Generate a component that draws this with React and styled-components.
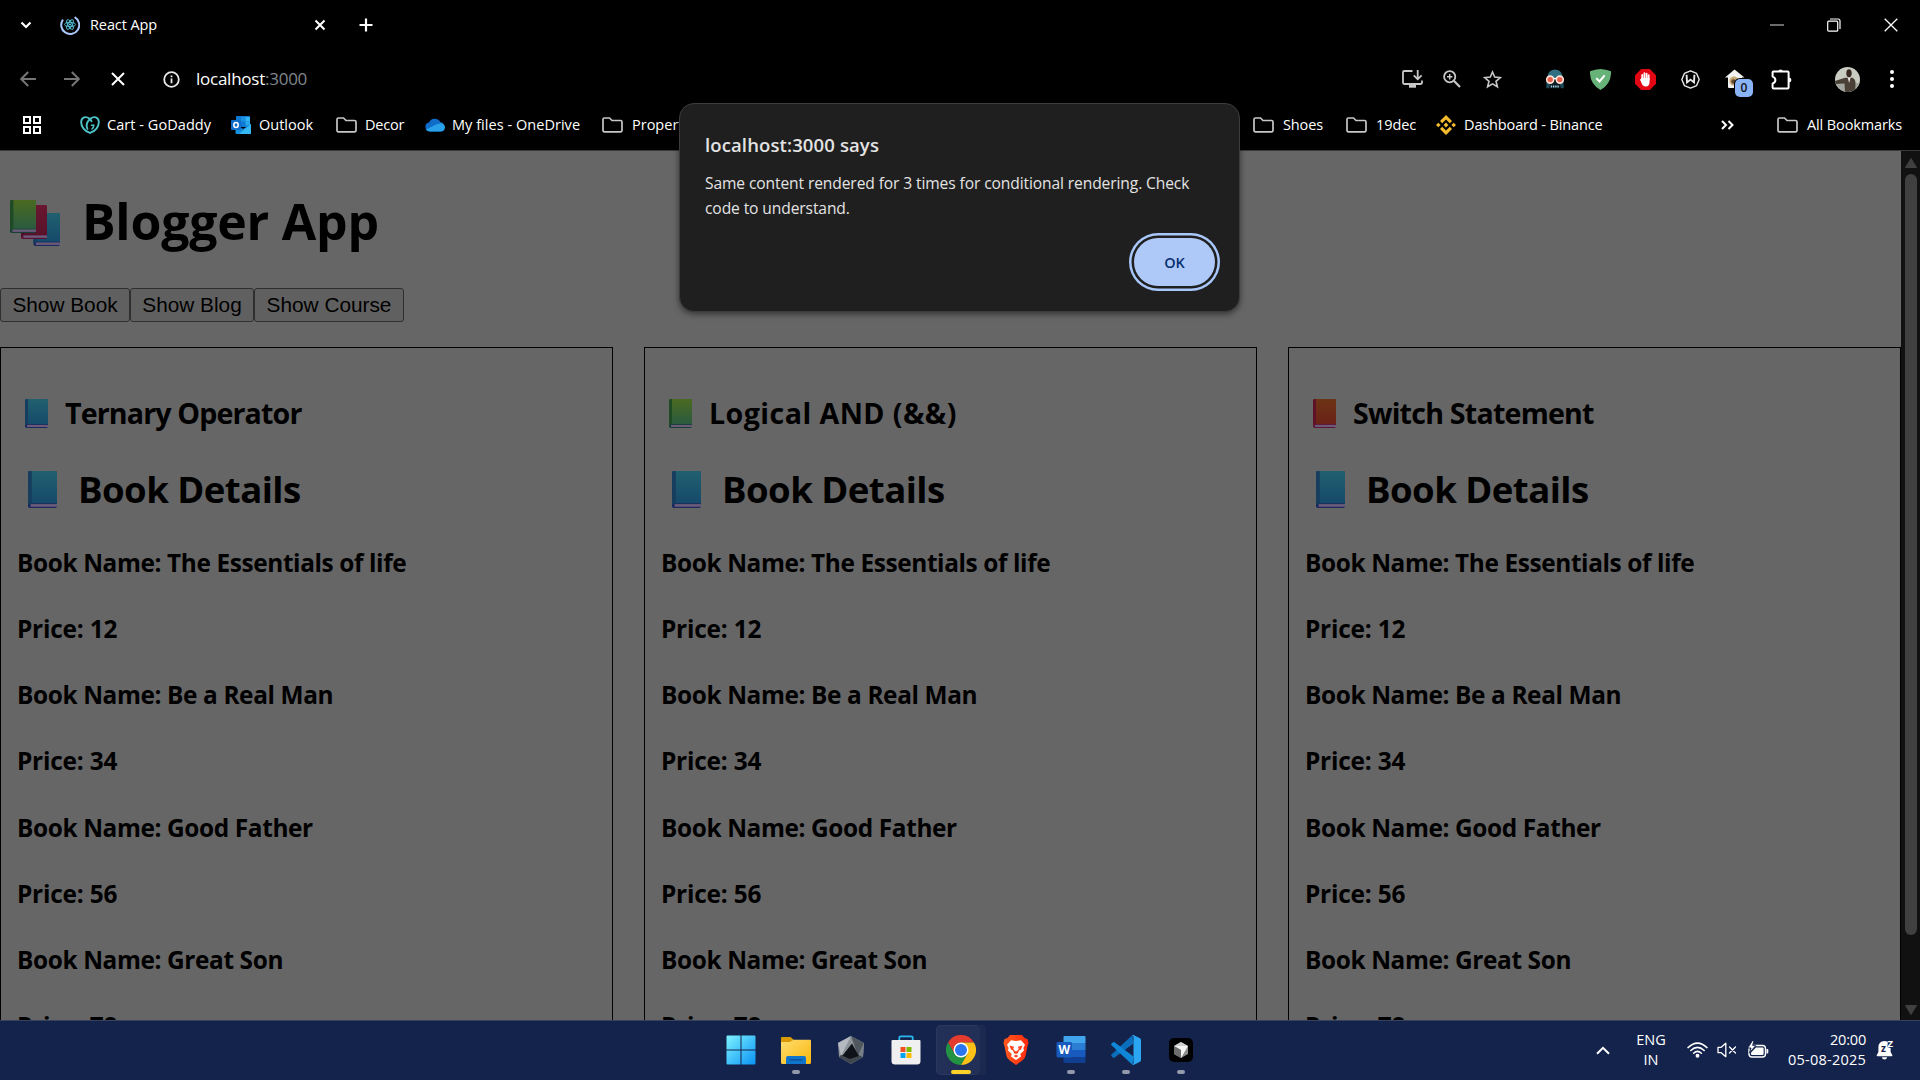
import React from "react";
import styled, { createGlobalStyle } from "styled-components";

const Global = createGlobalStyle`
  * { box-sizing: border-box; }
  body { margin: 0; background: #000; overflow: hidden; }
  svg { display: block; flex: none; }
`;

const ui = `"Open Sans", "Noto Sans", sans-serif`;

const Screen = styled.div`
  position: relative;
  width: 1920px;
  height: 1080px;
  display: flex;
  flex-direction: column;
  overflow: hidden;
  background: #000;
  font-family: ${ui};
`;

/* ---------- browser chrome ---------- */
const Bar = styled.div`
  display: flex;
  align-items: center;
  height: ${(p) => p.$h}px;
  padding-bottom: ${(p) => p.$pb || 0}px;
  flex: none;
  color: #fff;
`;
const Slot = styled.div`
  display: flex;
  flex: none;
  align-items: center;
  justify-content: center;
  width: ${(p) => p.$w}px;
  margin-left: ${(p) => p.$ml || 0}px;
`;
const Label = styled.span`
  flex: none;
  width: ${(p) => p.$w}px;
  margin-left: ${(p) => p.$ml || 0}px;
  font-size: ${(p) => p.$size || 14.5}px;
  line-height: 24px;
  letter-spacing: ${(p) => p.$ls || 0}px;
  white-space: pre;
  color: #fff;
`;
const Dim = styled.span`
  color: #80868b;
`;
const Spacer = styled.div`
  flex: 1;
`;
const ExtensionHouse = styled.div`
  position: relative;
  flex: none;
  width: 28px;
  height: 28px;
  margin-left: 25px;
`;
const Badge = styled.span`
  position: absolute;
  left: 10px;
  top: 14px;
  width: 18px;
  height: 18px;
  border-radius: 5px;
  background: #8ab4f8;
  box-shadow: 0 0 0 1px #000;
  color: #111;
  font: 600 12px/18px ${ui};
  text-align: center;
`;

/* ---------- page ---------- */
const Viewport = styled.div`
  display: flex;
  height: 870px;
  flex: none;
  border-top: 1px solid #3a3a3a;
  overflow: hidden;
`;
const Page = styled.main`
  width: 1901px;
  height: 869px;
  background: #666;
  color: #000;
  overflow: hidden;
`;
const Title = styled.h1`
  display: flex;
  align-items: center;
  margin: 0;
  height: 137px;
  padding: 3px 0 0 10px;
  font-size: 50px;
  line-height: 134px;
  letter-spacing: -0.22px;
  white-space: nowrap;
`;
const TitleText = styled.span`
  margin-left: 22px;
`;
const BooksSlot = styled.span`
  display: flex;
  padding-top: 3px;
`;
const Buttons = styled.div`
  display: flex;
  height: 34px;
  margin-bottom: 25px;
`;
const PageButton = styled.button`
  width: ${(p) => p.$w}px;
  height: 34px;
  padding: 0;
  border: 1px solid #2f2f2f;
  border-radius: 3px;
  background: #606060;
  color: #000;
  font: 20.8px/30px "Liberation Sans", Arial, sans-serif;
  white-space: nowrap;
`;
const Cards = styled.div`
  display: grid;
  grid-template-columns: repeat(3, 613px);
  column-gap: 31px;
`;
const Card = styled.section`
  height: 800px;
  border: 1px solid #000;
  padding: 45px 16px 0;
`;
const CardTitle = styled.h3`
  display: flex;
  align-items: center;
  height: 40px;
  margin: 0 0 31px;
  padding-left: 8px;
  font-size: 28.6px;
  line-height: 40px;
  letter-spacing: ${(p) => p.$ls}px;
  white-space: nowrap;
`;
const CardTitleText = styled.span`
  margin-left: 17px;
`;
const Details = styled.h2`
  display: flex;
  align-items: center;
  height: 50px;
  margin: 0 0 16px;
  padding-left: 11px;
  font-size: 36.6px;
  line-height: 50px;
  letter-spacing: -0.56px;
  white-space: nowrap;
`;
const DetailsText = styled.span`
  margin-left: 21px;
`;
const Item = styled.h4`
  margin: 0;
  height: 66.15px;
  font-size: 24.4px;
  line-height: 66.15px;
  letter-spacing: ${(p) => (p.$price ? -0.2 : -0.38)}px;
  white-space: nowrap;
`;
const Scrollbar = styled.div`
  display: flex;
  flex-direction: column;
  align-items: center;
  width: 19px;
  height: 869px;
  padding: 7px 0 5px;
  background: #111;
`;
const Thumb = styled.div`
  width: 12px;
  height: 761px;
  margin-top: 6px;
  border-radius: 6px;
  background: #404040;
`;

/* ---------- alert ---------- */
const Dialog = styled.div`
  position: absolute;
  left: 679px;
  top: 103px;
  width: 561px;
  height: 209px;
  padding: 27px 20px 0 25px;
  display: flex;
  flex-direction: column;
  border: 1px solid #3c3c3c;
  border-radius: 15px;
  background: #1f1f1f;
  color: #e3e3e3;
  box-shadow: 0 2px 6px rgba(0, 0, 0, 0.5);
`;
const DialogTitle = styled.div`
  font-size: 18.5px;
  font-weight: 600;
  line-height: 28px;
  letter-spacing: 0.12px;
  white-space: nowrap;
`;
const DialogText = styled.div`
  margin-top: 11.5px;
  font-size: 15.6px;
  line-height: 25px;
  letter-spacing: -0.11px;
  white-space: pre;
`;
const OkButton = styled.button`
  align-self: flex-end;
  width: 81px;
  height: 48px;
  margin: 17.5px 4px 0 0;
  padding: 0;
  border: 0;
  border-radius: 24px;
  background: #aec9f8;
  color: #062e6f;
  font: 600 14.5px/49px ${ui};
  box-shadow: 0 0 0 2.5px #1f1f1f, 0 0 0 5px #a8c7fa;
`;

/* ---------- taskbar ---------- */
const Taskbar = styled.footer`
  display: flex;
  align-items: flex-start;
  height: 60px;
  flex: none;
  border-top: 1px solid #38425f;
  background: #14234b;
  color: #fff;
`;
const Apps = styled.div`
  display: flex;
  gap: 5px;
  margin-left: 716px;
  padding-top: 4px;
`;
const AppSlot = styled.div`
  display: flex;
  flex-direction: column;
  align-items: center;
  width: 50px;
  height: 50px;
  padding-top: 10px;
  border-radius: 5px;
  background: ${(p) => (p.$active ? "#222f57" : "transparent")};
  box-shadow: ${(p) => (p.$active ? "inset -6px 0 0 #1b294f, inset 0 0 0 1px #2b385e" : "none")};
`;
const Indicator = styled.div`
  width: ${(p) => (p.$active ? 20 : 8)}px;
  height: 4px;
  margin-top: 5px;
  border-radius: 2px;
  background: ${(p) => (p.$active ? "#fdd32a" : p.$on ? "#9299ab" : "transparent")};
`;
const Tray = styled.div`
  display: flex;
  align-items: center;
  height: 58px;
  margin-left: 390px;
`;
const TrayText = styled.div`
  display: flex;
  flex-direction: column;
  flex: none;
  width: ${(p) => p.$w}px;
  margin-left: ${(p) => p.$ml}px;
  font-size: 14.5px;
  line-height: 20px;
  text-align: ${(p) => p.$align};
  white-space: pre;
`;
const TrayLine = styled.span`
  letter-spacing: ${(p) => p.$ls || 0}px;
`;

const Line = ({ w, h, d, color = "#fff", sw = 2, vb }) => (
  <svg width={w} height={h} viewBox={vb || `0 0 ${w} ${h}`} fill="none" stroke={color} strokeWidth={sw}>
    <path d={d} />
  </svg>
);

const Folder = () => (
  <Line w={21} h={16} sw={1.7} color="#c7c7c7" d="M1 2.5Q1 1 2.5 1H7.5L10 3.5H18.5Q20 3.5 20 5V13Q20 14.8 18.5 14.8H2.5Q1 14.8 1 13Z" />
);

const bookColors = {
  blue: ["#20606f", "#15486a", "#163d5e", "#1a2a5c"],
  green: ["#4b6a20", "#285a42", "#1f4a26", "#173f38"],
  orange: ["#6d3414", "#6b2018", "#5f1226", "#5b1638"],
  crimson: ["#6a1630", "#58122a", "#4a1028", "#5a0f30"],
  lime: ["#4b6a20", "#285a42", "#1f4a26", "#173f38"],
};
const BookShape = ({ c, id, w, h, x = 0, y = 0 }) => {
  const [a, b, spine, edge] = bookColors[c];
  const s = w * 0.13;
  const p = h * 0.1;
  return (
    <g transform={`translate(${x} ${y})`}>
      <defs>
        <linearGradient id={id} x1="0" y1="0" x2="0" y2="1">
          <stop offset="0" stopColor={a} />
          <stop offset="1" stopColor={b} />
        </linearGradient>
      </defs>
      <rect width={w} height={h} rx="1.8" fill={edge} />
      <rect x={s * 0.7} y={h - p - 0.2} width={w - s * 0.7} height={p * 0.72} fill="#6b5a78" />
      <path d={`M1.8 0H${w - 1.5}Q${w} 0 ${w} 1.5V${h - p - 1}H2Q0 ${h - p - 1} 0 ${h - p + 1}V1.8Q0 0 1.8 0Z`} fill={`url(#${id})`} />
      <path d={`M1.8 0H${s}V${h - p - 1}H2Q0 ${h - p - 1} 0 ${h - p + 1}V1.8Q0 0 1.8 0Z`} fill={spine} />
    </g>
  );
};
const Book = ({ c, id, w, h }) => (
  <svg width={w} height={h}>
    <BookShape c={c} id={id} w={w} h={h} />
  </svg>
);
const Books = () => (
  <svg width="50" height="46" viewBox="0 0 50 46">
    <BookShape c="blue" id="bk-a" w={26.5} h={33} x={23.5} y={13} />
    <BookShape c="crimson" id="bk-b" w={26} h={34} x={11} y={5} />
    <BookShape c="lime" id="bk-c" w={26} h={33} x={0} y={0} />
  </svg>
);

const Favicon = () => (
  <svg width="20" height="20" viewBox="0 0 20 20" fill="none">
    <path d="M14.6 2.1A9 9 0 1 1 3 4.6" stroke="#a8c7fa" strokeWidth="2" />
    <g stroke="#58c4dc" strokeWidth="0.9">
      <ellipse cx="10" cy="9.5" rx="5.4" ry="2.1" />
      <ellipse cx="10" cy="9.5" rx="5.4" ry="2.1" transform="rotate(60 10 9.5)" />
      <ellipse cx="10" cy="9.5" rx="5.4" ry="2.1" transform="rotate(120 10 9.5)" />
    </g>
    <circle cx="10" cy="9.5" r="1.1" fill="#58c4dc" />
  </svg>
);
const Info = () => (
  <svg width="17" height="17" viewBox="0 0 17 17" fill="none">
    <circle cx="8.5" cy="8.5" r="7.3" stroke="#e8e8e8" strokeWidth="1.8" />
    <path d="M8.5 7.5V12.3M8.5 4.6V6.3" stroke="#e8e8e8" strokeWidth="1.8" />
  </svg>
);
const Grid = () => (
  <Line w={18} h={18} sw={2} d="M1 1H7V7H1ZM11 1H17V7H11ZM1 11H7V17H1ZM11 11H17V17H11Z" />
);
const GoDaddy = () => (
  <svg width="20" height="18" viewBox="0 0 20 18" fill="none" stroke="#4cc3c7" strokeWidth="1.9" strokeLinecap="round">
    <path d="M10 16.8C4.8 15.5 .8 10.5 1.2 5.6C1.6 1 6 0 9.3 2.6C10.3 3.4 11 4.3 11.5 5.2" />
    <path d="M10 16.8C15.2 15.5 19.2 10.5 18.8 5.6C18.4 1 14 0 10.7 2.6C7 5.6 5.8 9.4 7.4 12.8" />
    <path d="M11.4 9.2H13.8Q13.6 11.6 12 13" strokeWidth="1.5" />
  </svg>
);
const Outlook = () => (
  <svg width="20" height="18" viewBox="0 0 20 18">
    <rect x="5" y="0" width="14" height="11" rx="1" fill="#0f78d4" />
    <rect x="10" y="1" width="4.5" height="4.5" fill="#1b90e0" />
    <rect x="14.5" y="1" width="4.5" height="4.5" fill="#32b4f2" />
    <rect x="14.5" y="5.5" width="4.5" height="4" fill="#28a8ea" />
    <path d="M4.5 8L12 13L20 8V17Q20 18 19 18H5.5Q4.5 18 4.5 17Z" fill="#1490df" />
    <path d="M20 8L8 18H19Q20 18 20 17Z" fill="#35b8f1" />
    <rect x="0" y="4" width="10" height="10" rx="1" fill="#0f6cc9" />
    <ellipse cx="5" cy="9" rx="2.2" ry="2.5" fill="none" stroke="#fff" strokeWidth="1.5" />
  </svg>
);
const OneDrive = () => (
  <svg width="20" height="14" viewBox="0 0 20 14">
    <path d="M4.6 13.5A4.5 4.5 0 0 1 4 4.6A6.2 6.2 0 0 1 15.2 4A4.9 4.9 0 0 1 15.5 13.5Z" fill="#0f6cc9" />
    <path d="M1 11.5L11.5 6.3L16 5.2Q20 6 20 9.4Q19.6 13.2 15.8 13.5H5Q2.2 13.3 1 11.5Z" fill="#28a0ea" />
  </svg>
);
const Binance = () => (
  <svg width="20" height="20" viewBox="0 0 20 20" fill="#f3ba2f">
    <path d="M10 0L16 6L13.8 8.2L10 4.4L6.2 8.2L4 6Z" />
    <path d="M10 20L4 14L6.2 11.8L10 15.6L13.8 11.8L16 14Z" />
    <path d="M10 7.6L12.4 10L10 12.4L7.6 10ZM2.3 7.7L4.6 10L2.3 12.3L0 10ZM17.7 7.7L20 10L17.7 12.3L15.4 10Z" />
  </svg>
);
const Install = () => (
  <svg width="21" height="18" viewBox="0 0 21 18" fill="none" stroke="#c7c7c7" strokeWidth="1.8">
    <path d="M10.5 1H2.2Q1 1 1 2.2V12.8Q1 14 2.2 14H18.8Q20 14 20 12.8V10.5" />
    <path d="M15.7 0V9M11.8 5.4L15.7 9.3L19.6 5.4" />
    <path d="M7 16.2H14" strokeWidth="3" />
  </svg>
);
const Zoom = () => (
  <svg width="18" height="18" viewBox="0 0 18 18" fill="none" stroke="#c7c7c7" strokeWidth="1.8">
    <circle cx="6.7" cy="6.7" r="5.6" />
    <path d="M10.8 10.8L17 17" strokeWidth="2.2" />
    <path d="M6.7 4V9.4M4 6.7H9.4" strokeWidth="1.5" />
  </svg>
);
const Star = () => (
  <Line w={19} h={19} sw={1.6} color="#c7c7c7" d="M9.5 2L11.7 7.1L17.3 7.6L13 11.3L14.4 16.8L9.5 13.9L4.6 16.8L6 11.3L1.7 7.6L7.3 7.1Z" />
);
const Robot = () => (
  <svg width="20" height="20" viewBox="0 0 20 20">
    <path d="M2.5 10Q2.2 .6 10 .5Q17.8 .6 17.5 10Z" fill="#2f6f82" />
    <path d="M1.3 12H18.7V19.3H15.8L14.6 14H5.4L4.2 19.3H1.3Z" fill="#1e4a5a" />
    <path d="M5 12H15V19.5H5Z" fill="#0c1a22" />
    <circle cx="5.2" cy="10.6" r="3.5" fill="#e8604c" stroke="#fde3d8" strokeWidth="1.6" />
    <circle cx="14.8" cy="10.6" r="3.5" fill="#e8604c" stroke="#fde3d8" strokeWidth="1.6" />
    <path d="M8.6 9.6H11.4" stroke="#fff" strokeWidth="1.4" />
    <path d="M5.8 17.6H14.2" stroke="#9fd4e4" strokeWidth="2" strokeDasharray="1.4 .8" />
  </svg>
);
const Shield = () => (
  <svg width="21" height="21" viewBox="0 0 21 21">
    <path d="M10.5 0Q16 .4 21 2.2Q21.6 14.6 10.5 21Q-.6 14.6 0 2.2Q5 .4 10.5 0Z" fill="#67b279" />
    <path d="M6.3 9.3L9.6 12.5L14.6 6.3" fill="none" stroke="#fff" strokeWidth="2" />
  </svg>
);
const Adblock = () => (
  <svg width="21" height="21" viewBox="0 0 21 21">
    <path d="M6.2 0H14.8L21 6.2V14.8L14.8 21H6.2L0 14.8V6.2Z" fill="#e30613" />
    <path d="M7.2 11.8V6M9.4 10V4.2M11.6 10V4.6M13.7 10.5V6.2" stroke="#fff" strokeWidth="1.8" strokeLinecap="round" />
    <path d="M6.3 9H14.6V12.5Q14.6 17.5 10.8 17.5Q7.5 17.5 6.3 13.6L5 10.7Z" fill="#fff" />
  </svg>
);
const Wapp = () => (
  <svg width="19" height="19" viewBox="0 0 19 19" fill="none" stroke="#e8e8e8">
    <path d="M9.5 .8L15.6 3.4L18.2 9.5L15.6 15.6L9.5 18.2L3.4 15.6L.8 9.5L3.4 3.4Z" strokeWidth="1.4" strokeLinejoin="round" />
    <path d="M5.6 4.8L6 12.4L9.5 9.6L13 12.4L13.4 4.8" strokeWidth="1.9" />
  </svg>
);
const House = () => (
  <svg width="20" height="24" viewBox="0 0 20 24">
    <path d="M9.5 4.5L19.5 12.5H17V22Q17 23 16 23H4Q3 23 3 22V12.5H0Z" fill="#f2f2f2" />
    <circle cx="9" cy="16" r="4.6" fill="#c9a878" />
    <circle cx="8.5" cy="16.5" r="2.2" fill="#5f4630" />
  </svg>
);
const Puzzle = () => (
  <svg width="21" height="21" viewBox="0 0 21 21" fill="none">
    <path d="M1.6 3.2Q1.6 2.6 2.4 2.6H16.6Q17.6 2.6 17.6 3.6V18.4Q17.6 19.4 16.6 19.4H2.6Q1.6 19.4 1.6 18.4V14.6Q4.4 13.4 4.4 11Q4.4 8.6 1.6 7.6Z" stroke="#fff" strokeWidth="2" strokeLinejoin="round" />
    <path d="M7.4 2.4Q7.4 .4 9.6 .4Q11.8 .4 11.8 2.4ZM18 8.6Q20.4 8.8 20.4 11Q20.4 13.2 18 13.4Z" fill="#fff" />
  </svg>
);
const Avatar = () => (
  <svg width="25" height="25" viewBox="0 0 25 25">
    <defs>
      <clipPath id="avatar-clip"><circle cx="12.5" cy="12.5" r="12.5" /></clipPath>
    </defs>
    <g clipPath="url(#avatar-clip)">
      <rect width="25" height="25" fill="#c9ccc0" />
      <rect y="16" width="25" height="9" fill="#a4a79f" />
      <path d="M0 14L10 10.8H17.5Q21 12 20.5 18L20 25H10L9.5 16.5L0 17Z" fill="#4a4038" />
      <path d="M12.6 10.5H15.6L14.2 16Z" fill="#e9e6e2" />
      <ellipse cx="14" cy="6.3" rx="2.7" ry="4" fill="#3a2a22" />
    </g>
  </svg>
);
const Dots = () => (
  <svg width="4" height="18" viewBox="0 0 4 18" fill="#fff">
    <circle cx="2" cy="2" r="2" /><circle cx="2" cy="9" r="2" /><circle cx="2" cy="16" r="2" />
  </svg>
);
const Restore = () => (
  <svg width="14" height="14" viewBox="0 0 14 14" fill="none" stroke="#fff" strokeWidth="1.2">
    <rect x="0.7" y="3.2" width="10" height="10" rx="1" />
    <path d="M3 1H11Q13 1 13 3V11" />
  </svg>
);

/* taskbar icons */
const Windows = () => (
  <svg width="30" height="30" viewBox="0 0 30 30">
    <defs>
      <linearGradient id="win" x1="0" y1="0" x2="1" y2="1">
        <stop offset="0" stopColor="#7df3ff" /><stop offset="1" stopColor="#0a93f5" />
      </linearGradient>
    </defs>
    <path fill="url(#win)" d="M1.5 .5H14.5V14.5H.5V1.5Q.5 .5 1.5 .5ZM15.5 .5H28.5Q29.5 .5 29.5 1.5V14.5H15.5ZM.5 15.5H14.5V29.5H1.5Q.5 29.5 .5 28.5ZM15.5 15.5H29.5V28.5Q29.5 29.5 28.5 29.5H15.5Z" />
  </svg>
);
const Explorer = () => (
  <svg width="30" height="30" viewBox="0 0 30 30">
    <defs>
      <linearGradient id="exp" x1="0" y1="0" x2="1" y2="1">
        <stop offset="0" stopColor="#ffdd70" /><stop offset="1" stopColor="#f8b70c" />
      </linearGradient>
    </defs>
    <path d="M0 3Q0 2 1 2H9.5L13 5V9H0Z" fill="#d99a06" />
    <path d="M0 7H9L12.5 4.8H29Q30 4.8 30 6V27.5Q30 29 28.5 29H1.5Q0 29 0 27.5Z" fill="url(#exp)" />
    <path d="M5 29V23Q5 21 7 21H23Q25 21 25 23V29Z" fill="#0f74cc" />
    <path d="M8.5 24.8H21.5" stroke="#0b4f96" strokeWidth="1.3" />
  </svg>
);
const Hexagon = () => (
  <svg width="30" height="30" viewBox="0 0 30 30">
    <path d="M15 1L28 8L27 22L15 29L3 22L2 8Z" fill="#8d949c" />
    <path d="M15 1L28 8L22 21Z" fill="#50575f" />
    <path d="M15 1L2 8L5 21Z" fill="#b4babf" />
    <path d="M28 8L27 22L22 21Z" fill="#777f87" />
    <path d="M3 22L15 29L27 22L22 20L5 20Z" fill="#3f464d" />
    <path d="M16 8.5L23 21L13.5 24L6.5 20.5Z" fill="#0f1318" />
  </svg>
);
const Store = () => (
  <svg width="30" height="30" viewBox="0 0 30 30">
    <path d="M8.3 6V2.8Q8.3 1.3 10 1.3H20Q21.7 1.3 21.7 2.8V6" fill="none" stroke="#28b8ee" strokeWidth="1.8" />
    <path d="M.5 6Q.5 5 1.5 5H28.5Q29.5 5 29.5 6V26Q29.5 29.5 26 29.5H4Q.5 29.5 .5 26Z" fill="#f0f0f0" />
    <rect x="9.5" y="12" width="5" height="5" fill="#f25022" />
    <rect x="15.5" y="12" width="5" height="5" fill="#7fba00" />
    <rect x="9.5" y="18" width="5" height="5" fill="#00a4ef" />
    <rect x="15.5" y="18" width="5" height="5" fill="#ffb900" />
  </svg>
);
const Chrome = () => (
  <svg width="30" height="30" viewBox="0 0 48 48">
    <path d="M24 12H44.8A24 24 0 0 0 3.2 12L13.6 30Z" fill="#e33b2e" />
    <path d="M13.6 30L3.2 12A24 24 0 0 0 24 48L34.4 30Z" fill="#229342" />
    <path d="M34.4 30L24 48A24 24 0 0 0 44.8 12H24Z" fill="#fbc116" />
    <circle cx="24" cy="24" r="12" fill="#fff" />
    <circle cx="24" cy="24" r="9.6" fill="#2a75f0" />
  </svg>
);
const Brave = () => (
  <svg width="30" height="30" viewBox="0 0 30 30">
    <defs>
      <linearGradient id="brv" x1="0" x2="1"><stop offset="0" stopColor="#ff5a1f" /><stop offset="1" stopColor="#ff2a0c" /></linearGradient>
    </defs>
    <path d="M9 0H21L23.5 3L26.5 4L27.5 8L26.3 12L24.5 21Q24 23.5 21.5 25.2L15 30L8.5 25.2Q6 23.5 5.5 21L3.7 12L2.5 8L3.5 4L6.5 3Z" fill="url(#brv)" />
    <path d="M10 5.2L15 6L20 5.2L24 9.8L22.4 13L23 15.5L19.3 19L20 21.5L15 25L10 21.5L10.7 19L7 15.5L7.6 13L6 9.8Z" fill="#fff" />
    <path d="M8.5 10.5L13 11.7L12.2 14L14 16L15 16.6L16 16L17.8 14L17 11.7L21.5 10.5L20 14.5L18 15.5L16.8 18.3L15 19L13.2 18.3L12 15.5L10 14.5ZM12.5 21L15 19.7L17.5 21L15 22.6Z" fill="#ff4019" />
  </svg>
);
const WordLetter = styled.text`
  font: 700 12px ${ui};
  fill: #fff;
`;
const Word = () => (
  <svg width="30" height="30" viewBox="0 0 30 30">
    <path d="M7.5 2Q7.5 1 8.5 1H28.5Q29.5 1 29.5 2V8H7.5Z" fill="#41a5ee" />
    <rect x="7.5" y="8" width="22" height="7" fill="#2b7cd3" />
    <rect x="7.5" y="15" width="22" height="7" fill="#185abd" />
    <path d="M7.5 22H29.5V27Q29.5 28 28.5 28H8.5Q7.5 28 7.5 27Z" fill="#103f91" />
    <rect x="0.5" y="7" width="15.5" height="15.5" rx="1.4" fill="#185abd" />
    <WordLetter x="8.2" y="19" textAnchor="middle">W</WordLetter>
  </svg>
);
const VsCode = () => (
  <svg width="30" height="30" viewBox="0 0 30 30">
    <path d="M21.5 0L22.5 8.5L3.6 22.6Q2.8 23.2 2 22.5L.4 21Q-.3 20.2 .5 19.5Z" fill="#0a6ebd" />
    <path d="M21.5 30L22.5 21.5L3.6 7.2Q2.8 6.6 2 7.3L.4 8.8Q-.3 9.6 .5 10.3Z" fill="#0f86d6" />
    <path d="M21.5 0Q22.3 -.2 23 .2L29 3.2Q30 3.7 30 5V25Q30 26.3 29 26.8L23 29.8Q22 30.2 21.2 29.6Q22.5 29.5 22.5 28V2Q22.5 .5 21.2 .4Z" fill="#2aa6f2" />
  </svg>
);
const Cursor = () => (
  <svg width="30" height="30" viewBox="0 0 30 30">
    <rect x="3" y="3" width="24" height="24" rx="5" fill="#000" />
    <path d="M15 7L22 11V19L15 23L8 19V11Z" fill="#8d8d8d" />
    <path d="M8 11L15 7L22 11Z" fill="#d0d0d0" />
    <path d="M8 11H22L15 23V15Z" fill="#f4f4f4" />
    <path d="M8 11L15 15V23L8 19Z" fill="#6e6e6e" />
  </svg>
);
const Wifi = () => (
  <svg width="21" height="16" viewBox="0 0 21 16" fill="none" stroke="#fff" strokeWidth="1.5" strokeLinecap="round">
    <path d="M1 5.6Q10.5 -3.4 20 5.6M3.8 8.5Q10.5 2.2 17.2 8.5M6.6 11.2Q10.5 7.6 14.4 11.2" />
    <circle cx="10.5" cy="13.8" r="1.2" fill="#fff" />
  </svg>
);
const Mute = () => (
  <svg width="20" height="16" viewBox="0 0 20 16" fill="none" stroke="#fff" strokeWidth="1.3" strokeLinejoin="round">
    <path d="M1 5.3H4.2L8.8 1.3V14.7L4.2 10.7H1Z" />
    <path d="M12.5 5L18.5 11M18.5 5L12.5 11" strokeLinecap="round" />
  </svg>
);
const Battery = () => (
  <svg width="21" height="18" viewBox="0 0 21 18">
    <rect x="1" y="4.5" width="16.5" height="11.5" rx="3" fill="none" stroke="#fff" strokeWidth="1.4" />
    <path d="M18.5 8H19.5Q20.3 8 20.3 9V11.5Q20.3 12.5 19.5 12.5H18.5Z" fill="#fff" />
    <path d="M8 6.5H14.5Q15.6 6.5 15.6 7.6V13Q15.6 14 14.5 14H4Q3 14 3 13V11.5Z" fill="#fff" />
    <path d="M4.5 -.5L-.2 7H3L1.6 11.8L7.8 4.4H4.6L6 -.5Z" fill="#fff" stroke="#14234b" strokeWidth="0.9" />
  </svg>
);
const BellText = styled.text`
  font: 700 ${(p) => p.$s}px ${ui};
  fill: ${(p) => p.$c};
`;
const Bell = () => (
  <svg width="19" height="20" viewBox="0 0 19 20">
    <path d="M8.5 1Q14.5 1 14.6 7.5V12L16.4 15.2Q16.6 16.3 15.5 16.3H1.5Q.4 16.3 .7 15.2L2.4 12V7.5Q2.5 1 8.5 1Z" fill="#fff" />
    <path d="M5.8 17.2H11.2Q10.6 19.6 8.5 19.6Q6.4 19.6 5.8 17.2Z" fill="#fff" />
    <path d="M12 0H18.5V8H14.6L11.4 7Z" fill="#14234b" />
    <BellText x="5" y="12.2" $s={10} $c="#14234b">z</BellText>
    <BellText x="11.6" y="7.4" $s={9.5} $c="#fff">Z</BellText>
  </svg>
);

const items = [
  "Book Name: The Essentials of life", "Price: 12",
  "Book Name: Be a Real Man", "Price: 34",
  "Book Name: Good Father", "Price: 56",
  "Book Name: Great Son", "Price: 78",
];
const columns = [
  { title: "Ternary Operator", color: "blue", spacing: -0.86 },
  { title: "Logical AND (&&)", color: "green", spacing: 0.45 },
  { title: "Switch Statement", color: "orange", spacing: -0.78 },
];
const apps = [
  { Icon: Windows }, { Icon: Explorer, on: true }, { Icon: Hexagon }, { Icon: Store },
  { Icon: Chrome, active: true }, { Icon: Brave }, { Icon: Word, on: true },
  { Icon: VsCode, on: true }, { Icon: Cursor, on: true },
];

export default function App() {
  return (
    <Screen>
      <Global />
      <Bar $h={50}>
        <Slot $w={12} $ml={20}><Line w={12} h={8} d="M1.5 1.5L6 6L10.5 1.5" sw={2.2} /></Slot>
        <Slot $w={20} $ml={28}><Favicon /></Slot>
        <Label $w={68} $ml={10} $ls={-0.1}>React App</Label>
        <Slot $w={12} $ml={156}><Line w={12} h={12} d="M1.5 1.5L10.5 10.5M10.5 1.5L1.5 10.5" /></Slot>
        <Slot $w={14} $ml={33}><Line w={14} h={14} d="M7 0.5V13.5M.5 7H13.5" sw={2.2} /></Slot>
        <Slot $w={14} $ml={1397}><Line w={14} h={2} d="M0 1H14" color="#9a9a9a" sw={1.4} /></Slot>
        <Slot $w={14} $ml={43}><Restore /></Slot>
        <Slot $w={14} $ml={43}><Line w={14} h={14} d="M.7 .7L13.3 13.3M13.3 .7L.7 13.3" sw={1.3} /></Slot>
      </Bar>
      <Bar $h={58}>
        <Slot $w={16} $ml={20}><Line w={16} h={16} d="M16 8H1.5M8.2 1L1.2 8L8.2 15" color="#757575" /></Slot>
        <Slot $w={16} $ml={28}><Line w={16} h={16} d="M0 8H14.5M7.8 1L14.8 8L7.8 15" color="#757575" /></Slot>
        <Slot $w={14} $ml={31}><Line w={14} h={14} d="M1 1L13 13M13 1L1 13" /></Slot>
        <Slot $w={17} $ml={38}><Info /></Slot>
        <Label $w={120} $ml={16} $size={17} $ls={-0.25}>localhost<Dim>:3000</Dim></Label>
        <Slot $w={21} $ml={1086}><Install /></Slot>
        <Slot $w={18} $ml={20}><Zoom /></Slot>
        <Slot $w={19} $ml={22}><Star /></Slot>
        <Slot $w={20} $ml={43}><Robot /></Slot>
        <Slot $w={21} $ml={25}><Shield /></Slot>
        <Slot $w={21} $ml={24}><Adblock /></Slot>
        <Slot $w={19} $ml={25}><Wapp /></Slot>
        <ExtensionHouse><House /><Badge>0</Badge></ExtensionHouse>
        <Slot $w={21} $ml={18}><Puzzle /></Slot>
        <Slot $w={25} $ml={43}><Avatar /></Slot>
        <Slot $w={4} $ml={30}><Dots /></Slot>
      </Bar>
      <Bar $h={42} $pb={8}>
        <Slot $w={18} $ml={23}><Grid /></Slot>
        <Slot $w={20} $ml={39}><GoDaddy /></Slot>
        <Label $w={104} $ml={7} $ls={0.05}>Cart - GoDaddy</Label>
        <Slot $w={20} $ml={20}><Outlook /></Slot>
        <Label $w={54} $ml={8}>Outlook</Label>
        <Slot $w={21} $ml={23}><Folder /></Slot>
        <Label $w={39} $ml={8} $ls={-0.2}>Decor</Label>
        <Slot $w={20} $ml={21}><OneDrive /></Slot>
        <Label $w={128} $ml={7} $ls={0.04}>My files - OneDrive</Label>
        <Slot $w={21} $ml={22}><Folder /></Slot>
        <Label $w={60} $ml={9}>Property</Label>
        <Slot $w={21} $ml={561}><Folder /></Slot>
        <Label $w={40} $ml={9} $ls={-0.12}>Shoes</Label>
        <Slot $w={21} $ml={23}><Folder /></Slot>
        <Label $w={40} $ml={9} $ls={-0.1}>19dec</Label>
        <Slot $w={20} $ml={20}><Binance /></Slot>
        <Label $w={139} $ml={8} $ls={-0.13}>Dashboard - Binance</Label>
        <Slot $w={13} $ml={118}><Line w={13} h={10} d="M1 1L5 5L1 9M7.5 1L11.5 5L7.5 9" /></Slot>
        <Slot $w={21} $ml={43}><Folder /></Slot>
        <Label $w={96} $ml={9} $ls={-0.12}>All Bookmarks</Label>
      </Bar>
      <Viewport>
        <Page>
          <Title><BooksSlot><Books /></BooksSlot><TitleText>Blogger App</TitleText></Title>
          <Buttons>
            <PageButton $w={130}>Show Book</PageButton>
            <PageButton $w={124}>Show Blog</PageButton>
            <PageButton $w={150}>Show Course</PageButton>
          </Buttons>
          <Cards>
            {columns.map((col) => (
              <Card key={col.title}>
                <CardTitle $ls={col.spacing}>
                  <Book c={col.color} id={`t-${col.color}`} w={23} h={29} />
                  <CardTitleText>{col.title}</CardTitleText>
                </CardTitle>
                <Details>
                  <Book c="blue" id={`d-${col.color}`} w={29} h={37} />
                  <DetailsText>Book Details</DetailsText>
                </Details>
                {items.map((t) => <Item key={t} $price={t.startsWith("Price")}>{t}</Item>)}
              </Card>
            ))}
          </Cards>
        </Page>
        <Scrollbar>
          <svg width="12" height="10"><path d="M6 .5L11.5 9.5H.5Z" fill="#404040" stroke="#404040" strokeLinejoin="round" /></svg>
          <Thumb />
          <Spacer />
          <svg width="12" height="10"><path d="M6 9.5L11.5 .5H.5Z" fill="#404040" stroke="#404040" strokeLinejoin="round" /></svg>
        </Scrollbar>
      </Viewport>
      <Taskbar>
        <Apps>
          {apps.map(({ Icon, on, active }, i) => (
            <AppSlot key={i} $active={active}><Icon /><Indicator $on={on} $active={active} /></AppSlot>
          ))}
        </Apps>
        <Tray>
          <Slot $w={14}><Line w={14} h={9} d="M1 7.8L7 1.8L13 7.8" /></Slot>
          <TrayText $w={34} $ml={24} $align="center"><TrayLine>ENG</TrayLine><TrayLine>IN</TrayLine></TrayText>
          <Slot $w={21} $ml={19}><Wifi /></Slot>
          <Slot $w={20} $ml={9}><Mute /></Slot>
          <Slot $w={21} $ml={11}><Battery /></Slot>
          <TrayText $w={80} $ml={17} $align="right"><TrayLine $ls={-0.2}>20:00</TrayLine><TrayLine $ls={0.23}>05-08-2025</TrayLine></TrayText>
          <Slot $w={19} $ml={10}><Bell /></Slot>
        </Tray>
      </Taskbar>
      <Dialog>
        <DialogTitle>localhost:3000 says</DialogTitle>
        <DialogText>{"Same content rendered for 3 times for conditional rendering. Check\ncode to understand."}</DialogText>
        <OkButton>OK</OkButton>
      </Dialog>
    </Screen>
  );
}
